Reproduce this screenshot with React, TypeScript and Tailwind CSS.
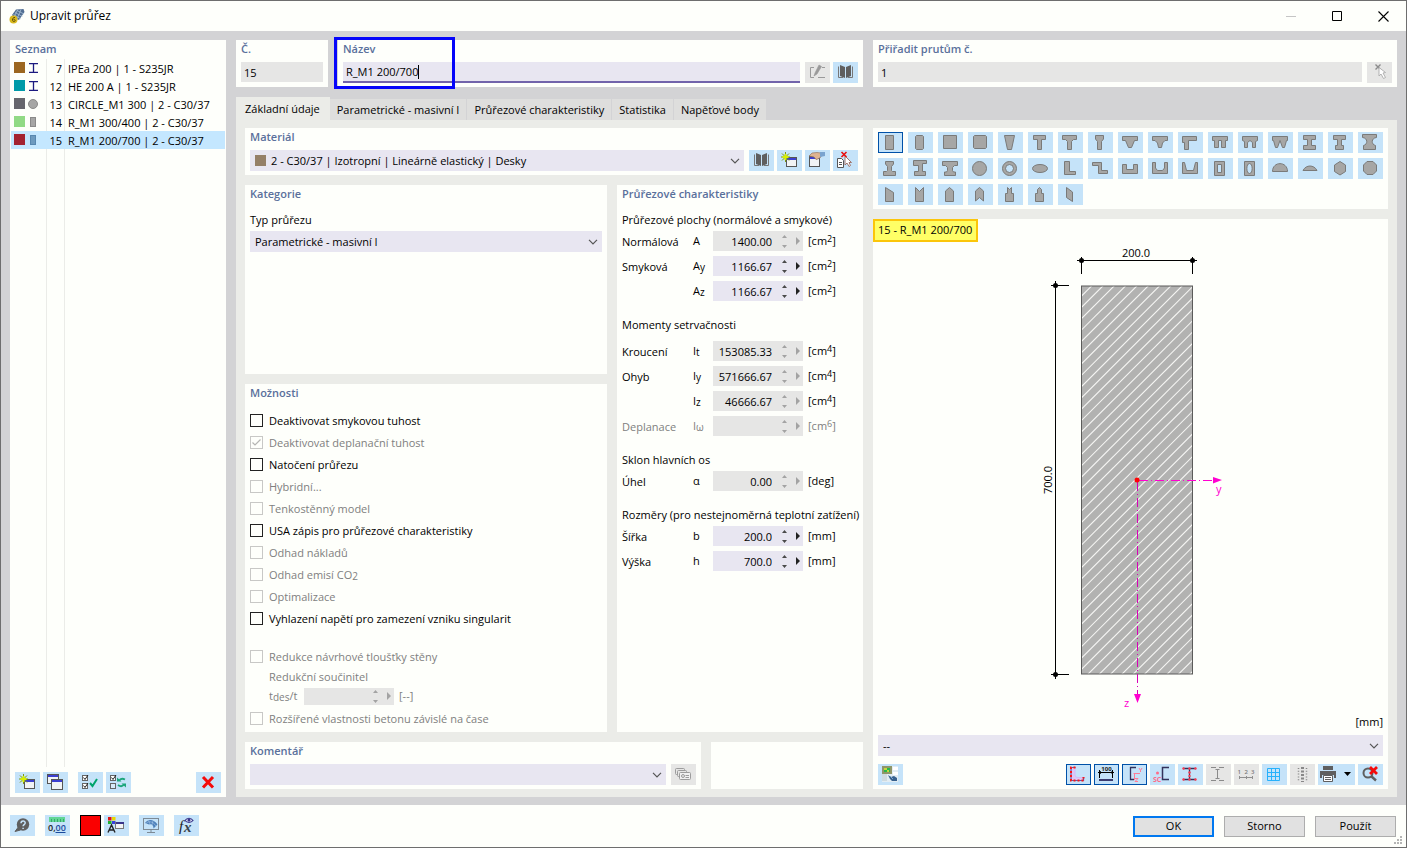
import { useState } from "react";
import type { ReactNode } from "react";
import clsx from "clsx";

/* ---------- shared pieces ---------- */

function Card({ title, className, children }: { title?: string; className?: string; children?: ReactNode }) {
  return (
    <section className={clsx("flex flex-col bg-[#fefffb] px-[5px] pb-1", className)}>
      {title && <h2 className="h-[22px] shrink-0 leading-[18px] font-semibold text-[#5a709b]">{title}</h2>}
      {children}
    </section>
  );
}

type ToolProps = {
  label: string;
  children?: ReactNode;
  off?: boolean;
  active?: boolean;
  wide?: boolean;
};

function Tool({ label, children, off, active, wide }: ToolProps) {
  return (
    <button
      type="button"
      aria-label={label}
      disabled={off}
      className={clsx(
        "relative h-[21px] shrink-0",
        wide ? "w-[37px]" : "w-[25px]",
        off ? "bg-[#e6e6e5]" : "bg-[#c5e3f9]",
        active && "outline outline-1 -outline-offset-1 outline-[#0051a8]",
      )}
    >
      <svg viewBox={wide ? "0 0 37 21" : "0 0 25 21"} className="block h-[21px] w-full" aria-hidden="true">
        {children}
      </svg>
    </button>
  );
}

function Chevron() {
  return (
    <svg viewBox="0 0 10 6" className="pointer-events-none absolute top-2 right-1 h-1.5 w-2.5" aria-hidden="true">
      <path d="M1 .8 5 4.8 9 .8" fill="none" stroke="#555" strokeWidth="1.2" />
    </svg>
  );
}

function Dropdown({ label, options, swatch }: { label: string; options: string[]; swatch?: boolean }) {
  return (
    <div className="relative flex h-[21px] min-w-0 flex-1 items-center gap-[5px] bg-[#e8e6f1] pl-[5px]">
      {swatch && <span className="size-[11px] shrink-0 bg-[#947f67]" />}
      <select aria-label={label} className="h-full min-w-0 flex-1 appearance-none bg-transparent pt-px outline-none">
        {options.map((o) => (
          <option key={o}>{o}</option>
        ))}
      </select>
      <Chevron />
    </div>
  );
}

function NumberField({ id, value, off, short }: { id: string; value: string; off?: boolean; short?: boolean }) {
  const fill = off ? "#a3a3a3" : "#4a4a4a";
  return (
    <div className={clsx("flex w-[90px] shrink-0 items-center", short ? "h-[17px]" : "h-5", off ? "bg-[#e6e6e5]" : "bg-[#e8e6f1]")}>
      <input id={id} defaultValue={value} disabled={off} className="h-full w-[59px] bg-transparent text-right outline-none" />
      <button type="button" aria-label="Krok" disabled={off} className="flex w-6 justify-center">
        <svg viewBox="0 0 5 13" className="h-[13px] w-[5px]" aria-hidden="true">
          <path d="M0 3 2.500 0 5 3ZM0 10 2.500 13 5 10Z" fill={fill} />
        </svg>
      </button>
      <button type="button" aria-label="Nabídka hodnot" disabled={off}>
        <svg viewBox="0 0 4 8" className="h-2 w-1" aria-hidden="true">
          <path d="M0 0 4 4 0 8Z" fill={off ? "#a3a3a3" : "#222"} />
        </svg>
      </button>
    </div>
  );
}

function Low({ children }: { children: ReactNode }) {
  return <span className="align-[-1px] text-[10px] leading-none">{children}</span>;
}

function High({ children }: { children: ReactNode }) {
  return <span className="align-[3px] text-[9px] leading-none">{children}</span>;
}

/* ---------- toolbar drawings ---------- */

const bookIcon = (
  <g fill="#5f5f5f">
    <path d="M7 3 12 5V16L7 14ZM18 3 13 5V16L18 14Z" />
    <path d="M5.500 4.500V15.500H10M19.500 4.500V15.500H15" fill="none" stroke="#777" />
  </g>
);

const smallWindow = (x: number, y: number, w = 10, h = 9) => (
  <g>
    <rect x={x + 0.5} y={y + 0.5} width={w} height={h} fill="#f1f3f5" stroke="#555" />
    <rect x={x + 1} y={y + 1} width={w - 1} height="2" fill="#3c3fd0" />
  </g>
);

const newIcon = (
  <g>
    {smallWindow(9, 7)}
    <path d="M8.500 2V12M4 7H13M5 3.500 12 10.500M12 3.500 5 10.500" stroke="#7d9a10" strokeWidth="1" />
    <path d="M8.500 4V10M5.500 7H11.500" stroke="#d8f000" strokeWidth="2" />
  </g>
);

const copyIcon = (
  <g>
    {smallWindow(4, 2, 11, 9)}
    {smallWindow(8, 7, 11, 10)}
  </g>
);

const editIcon = (
  <g>
    {smallWindow(4, 6, 10, 10)}
    <path d="M4 6 7 3 12 2.500 16 3V7L13 9 11 9.500 9 7Z" fill="#deb492" stroke="#8c6a50" strokeWidth=".6" />
    <path d="M15 2H20V6L15 7Z" fill="#7aa3cf" />
  </g>
);

const cursor = (stroke: string) => (
  <path d="M12 6V15L14 13 16 16.500 17.500 15.500 16 12.500H18.500Z" fill="#fff" stroke={stroke} strokeWidth=".9" />
);

const removeUsageIcon = (
  <g>
    <path d="M4.500 8.500H8.500L10.500 10.500V17.500H4.500Z" fill="#fff" stroke="#555" />
    <path d="M6 12.500H9M6 14.500H9" stroke="#555" />
    {cursor("#9a6a60")}
    <path d="M8.500 2 13.500 7M13.500 2 8.500 7" stroke="#e81010" strokeWidth="1.600" />
  </g>
);

const pickIcon = (
  <g>
    <path d="M8.500 2.500 13.500 7.500M13.500 2.500 8.500 7.500" stroke="#8b8b8b" strokeWidth="1.400" />
    <path d="M12 5.500V14L14 12 16.500 16.500 18.500 15.500 16 11 18.500 10.500Z" fill="#fff" stroke="#aaa" strokeWidth=".9" />
  </g>
);

const renameIcon = (
  <g fill="none" stroke="#9a9a9a">
    <path d="M9 5.500H5.500V15.500H9M13 15.500H20M17 5.500H20" />
    <path d="M9 14 10 11 14 3 16.500 4.500 12 12Z" fill="#999" stroke="#999" strokeWidth=".6" />
  </g>
);

const checkPair = (second: boolean) => (
  <g>
    <rect x="4.500" y="3.500" width="5" height="5" fill="#fff" stroke="#666" />
    <path d="M5.500 5.500 7 7.500 10 3" fill="none" stroke="#222" />
    <rect x="4.500" y="11.500" width="5" height="5" fill={second ? "#fff" : "#d8ebf9"} stroke="#666" />
    {second && <path d="M5.500 13.500 7 15.500 10 11" fill="none" stroke="#222" />}
  </g>
);

const checkAllIcon = (
  <g>
    {checkPair(true)}
    <path d="M12 11 14.500 14 19 7" fill="none" stroke="#00a46c" strokeWidth="2" />
  </g>
);

const invertIcon = (
  <g>
    {checkPair(false)}
    <path d="M19 7.500C17 6.500 15 6.500 13.500 8M12 13C14 14.500 16.500 14.500 18 12.500" fill="none" stroke="#1da67b" strokeWidth="1.800" />
    <path d="M11 9.500V5.500L15.500 9.500ZM20 11.500V15.500L15.500 11.500Z" fill="#1da67b" />
  </g>
);

const deleteIcon = <path d="M7 5 17 15.500M17 5 7 15.500" stroke="#f40b0b" strokeWidth="3" />;

const commentIcon = (
  <g stroke="#9c9c9c" fill="#e6e6e5">
    <rect x="4.500" y="4.500" width="9" height="6" rx="1" />
    <rect x="6.500" y="6.500" width="9" height="6" rx="1" />
    <rect x="8.500" y="8.500" width="11" height="7" rx="1" fill="#f1f1f1" />
    <circle cx="12" cy="12" r="1.500" />
    <path d="M14.500 11.500H18M14.500 13.500H18" />
  </g>
);

const helpIcon = (
  <g>
    <path d="M5 16.500 8 12.500 10.500 15Z" fill="#5f5f5f" stroke="#5f5f5f" />
    <circle cx="13" cy="9.500" r="6.200" fill="#5f5f5f" />
    <path d="M11 8.300C11 5.200 15.300 5.400 15.200 8C15.100 9.600 13.100 9.600 13.100 11.300M13.100 12.700V14" fill="none" stroke="#c5e3f9" strokeWidth="1.500" />
  </g>
);

const unitsIcon = (
  <g>
    <rect x="4" y="2" width="16" height="5" fill="#62d695" />
    <path d="M6.500 4V7M9.500 4V7M12.500 4V7M15.500 4V7M18.500 4V7" stroke="#2a9c60" strokeWidth=".8" />
    <text x="3" y="16" fontSize="9" fontWeight="600" fill="#222">0,</text>
    <text x="10.500" y="16" fontSize="9" fontWeight="600" fill="#1a4a9c">00</text>
    <path d="M10.500 17.500H20.500" stroke="#1a4a9c" />
  </g>
);

const displayIcon = (
  <g>
    <rect x="4" y="2" width="3.500" height="3.500" fill="#e01010" />
    <rect x="8" y="2" width="3.500" height="3.500" fill="#e8d800" />
    <rect x="4" y="6" width="3.500" height="3" fill="#20b030" />
    <rect x="8" y="6" width="3.500" height="3" fill="#3840e0" />
    <path d="M4 17.500 7.500 10 11 17.500M5 15H10M7.500 10V12" fill="none" stroke="#222" strokeWidth="1.400" />
    <rect x="11.500" y="7.500" width="8" height="6" fill="#f1f3f5" stroke="#777" />
    <rect x="12" y="7" width="8" height="2" fill="#38358a" />
  </g>
);

const monitorIcon = (
  <g>
    <rect x="4.500" y="3.500" width="15" height="11" fill="#c5e3f9" stroke="#7d8a95" />
    <path d="M12 15V17M8 17.500H16" stroke="#7d8a95" />
    <path d="M6 8C9 3.500 15 4 18.500 9.500L14.500 13.500C14.500 10.500 13 8.500 10 9.500Z" fill="#4d80ba" />
    <path d="M7 8.500C10 5.500 14 6.500 17 11M9.500 5.500 11 9M14 5.500 13 10" fill="none" stroke="#a9c8e8" strokeWidth=".6" />
  </g>
);

const formulaIcon = (
  <g>
    <text x="5" y="15.500" fontSize="15" fontStyle="italic" fontFamily="Liberation Serif, serif" fill="#222">f</text>
    <text x="10" y="17" fontSize="15" fontStyle="italic" fontWeight="700" fontFamily="Liberation Serif, serif" fill="#38414a">x</text>
    <path d="M11 5.500C13 2.500 17 2.500 19 5.500C17 8 13 8 11 5.500Z" fill="#dfe6f5" stroke="#38358a" strokeWidth="1.200" />
    <circle cx="15" cy="5" r="1.500" fill="#38358a" />
  </g>
);

const renderIcon = (
  <g>
    <rect x="4" y="2" width="16" height="16" fill="#e2edf3" />
    <rect x="4" y="2" width="10" height="8" fill="#8f9668" />
    <path d="M4 10H9V17H4Z" fill="#cfdbe0" />
    <path d="M6 4H12V8H6Z" fill="#28b84a" />
    <path d="M6 4H9V6H6ZM9 6H11V8H9Z" fill="#c3d83a" />
    <path d="M15 3H20V6H15ZM15 8H20V11H15Z" fill="#fff" />
    <path d="M10 11 13 13 16 12 19 14V17H14L12 15Z" fill="#37618e" />
    <path d="M12 12 15 15" stroke="#7fa9cf" />
  </g>
);

const outlineIcon = (
  <g>
    <path d="M5.500 3.500H9V11C9 12.500 10 13.500 12 13.500H17.500V16.500H5.500Z" fill="#dcc8f7" stroke="#d3bcf5" />
    <path d="M9.500 3.500H5V16.500H17.500V13" fill="none" stroke="#605ca8" strokeWidth="1.200" />
    <path d="M9.500 3.500H5V16.500H17.500V13" fill="none" stroke="#fb1616" strokeWidth="2" strokeDasharray="2 2" />
  </g>
);

const dimensionIcon = (
  <g>
    <text x="12.500" y="7" fontSize="6" fontWeight="700" textAnchor="middle" fill="#222">100</text>
    <path d="M5.500 6V14M18.500 6V14M4 8.500H20" stroke="#000" fill="none" />
    <path d="M4 8.500 7 7V10ZM20 8.500 17.500 7V10Z" />
    <rect x="5" y="15" width="14" height="2" fill="#3a3c70" />
  </g>
);

const axesIcon = (
  <g fill="none">
    <path d="M14 3.500H8.500V15.500H12" stroke="#33335c" strokeWidth="1.300" />
    <path d="M11.500 9.500H18M12.500 9V16" stroke="#ff7c96" />
    <path d="M17 4 18.500 6.500 20 4M18.500 6.500V8M13 14.500H16L13 17.500H16" stroke="#ff7c96" />
  </g>
);

const shearCenterIcon = (
  <g fill="none">
    <path d="M19 3.500H12.500V15.500H19" stroke="#33335c" strokeWidth="1.500" />
    <circle cx="7.500" cy="9" r="1.500" fill="#ff6b88" />
    <text x="3" y="17.500" fontSize="7" fontWeight="700" fill="#ff6b88">SC</text>
  </g>
);

const pointsIcon = (
  <g>
    <path d="M5 4.500H18M5 15.500H18M11.500 4V16" stroke="#33335c" strokeWidth="1.300" />
    <g fill="#ff3a50">
      {[[5.5, 4.5], [11.5, 4.5], [17.5, 4.5], [11.5, 8.5], [11.5, 12], [5.5, 15.5], [11.5, 15.5], [17.5, 15.5]].map(([x, y]) => (
        <circle key={`${x}-${y}`} cx={x} cy={y} r="1.200" />
      ))}
    </g>
  </g>
);

const partsIcon = (
  <g stroke="#8a8a8a">
    <path d="M5 3.500H10M13 3.500H18M5 16.500H10M13 16.500H18M11.500 5V15M9.500 5.500H13.500M9.500 14.500H13.500" />
  </g>
);

const numberingIcon = (
  <g>
    <text x="3.500" y="10" fontSize="6" fontWeight="600" fill="#7a7a7a">1</text>
    <text x="10.500" y="10" fontSize="6" fontWeight="600" fill="#7a7a7a">2</text>
    <text x="17" y="10" fontSize="6" fontWeight="600" fill="#7a7a7a">3</text>
    <path d="M5 13.500H19M5.500 12V15M12.500 12V15M18.500 12V15" stroke="#8f8f8f" />
  </g>
);

const gridIcon = (
  <path d="M5.500 4.500H17.500V16.500H5.500ZM9.500 4.500V16.500M13.500 4.500V16.500M5.500 8.500H17.500M5.500 12.500H17.500" fill="none" stroke="#27b1fb" />
);

const stressIcon = (
  <g stroke="#888" strokeDasharray="2 1.500">
    <path d="M8.500 4V17M16.500 4V17" strokeWidth="1.500" strokeDasharray="1 1.800" />
    <path d="M12.500 3V18" strokeWidth="3" />
  </g>
);

const printIcon = (
  <g>
    <path d="M5 2H15V6H5ZM2 7H18V14H16V11H4V14H2Z" fill="#5f5f5f" />
    <path d="M5.500 11.500H14.500V17.500H5.500Z" fill="#fff" stroke="#5f5f5f" />
    <path d="M7 13.500H13M7 15.500H13" stroke="#5f5f5f" />
    <path d="M26 8H33L29.500 12Z" fill="#000" />
  </g>
);

const zoomResetIcon = (
  <g>
    <circle cx="10" cy="9" r="4.500" fill="none" stroke="#5f5f5f" strokeWidth="2" />
    <path d="M13 12 18 16.500" stroke="#5f5f5f" strokeWidth="2.400" />
    <path d="M12 3 19 10M19 3 12 10" stroke="#f40b0b" strokeWidth="2.800" />
  </g>
);

/* ---------- section library ---------- */

const library: { name: string; d: string }[] = [
  { name: "Obdélník", d: "M7.500 3.500H15.500V17.500H7.500Z" },
  { name: "Obdélník zaoblený", d: "M8.500 3.500H14.500L15.500 4.500V16.500L14.500 17.500H8.500L7.500 16.500V4.500Z" },
  { name: "Čtverec", d: "M5.500 3.500H18.500V16.500H5.500Z" },
  { name: "Čtverec zaoblený", d: "M6.500 3.500H17.500L18.500 4.500V15.500L17.500 16.500H6.500L5.500 15.500V4.500Z" },
  { name: "Lichoběžník", d: "M6.500 3.500H16.500L13.500 17.500H9.500Z" },
  { name: "T", d: "M5.500 3.500H17.500V7.500H13.500V17.500H9.500V7.500H5.500Z" },
  { name: "T s náběhem", d: "M4.500 3.500H18.500V7.500H15.500L13.500 9.500V17.500H9.500V9.500L7.500 7.500H4.500Z" },
  { name: "T úzké", d: "M7.500 3.500H15.500V7L13.500 9.500V17.500H9.500V9.500L7.500 7Z" },
  { name: "T zkosené", d: "M4.500 4.500H19.500V8.500H16.500L13.500 15.500H10.500L7.500 8.500H4.500Z" },
  { name: "T zaoblené", d: "M4.500 4.500H19.500V8.500H17L14.500 11L13.500 15.500H10.500L9.500 11L7 8.500H4.500Z" },
  { name: "T jednostranné", d: "M4.500 4.500H18.500V8.500H10.500V17.500H6.500V10.500H4.500Z" },
  { name: "TT", d: "M4.500 4.500H19.500V8.500H17.500V15.500H13.500V8.500H10.500V15.500H6.500V8.500H4.500Z" },
  { name: "TT s náběhem", d: "M4.500 4.500H19.500V8.500L17.500 9.500V15.500H14.500V10.500L12 8.500L9.500 10.500V15.500H6.500V9.500L4.500 8.500Z" },
  { name: "TT zkosené", d: "M4.500 4.500H19.500V8.500H18.500L16.500 15.500H14.500L12 8.500L9.500 15.500H7.500L5.500 8.500H4.500Z" },
  { name: "I symetrické", d: "M5.500 3.500H17.500V7.500H13.500V13.500H17.500V17.500H5.500V13.500H9.500V7.500H5.500Z" },
  { name: "I nesymetrické", d: "M5.500 3.500H17.500V7.500H13.500V13.500H15.500V17.500H7.500V13.500H9.500V7.500H5.500Z" },
  { name: "I s oblouky", d: "M4.500 2.500H18.500V5.500C13 6 13 12.500 17.500 13.500V17.500H5.500V13.500C10 12.500 10 6 4.500 5.500Z" },
  { name: "I s náběhy", d: "M7.500 3.500H15.500V6L13.500 8.500V12.500L14.500 13.500H17.500V17.500H5.500V13.500H8.500L9.500 12.500V8.500L7.500 6Z" },
  { name: "I posunuté", d: "M5.500 2.500H18.500V5.500H14.500V13.500H17.500V17.500H6.500V13.500H10.500V7.500H5.500Z" },
  { name: "I široké", d: "M4.500 3.500H19.500V7.500H16.500L14.500 9.500V12.500L15.500 14H17.500V17.500H6.500V14H8.500L9.500 12.500V9.500L7.500 7.500H4.500Z" },
  { name: "Kruh", d: "M11.500 3.500A7 7 0 1 1 11.500 17.500A7 7 0 1 1 11.500 3.500Z" },
  { name: "Mezikruží", d: "M11.500 3.500A7 7 0 1 1 11.500 17.500A7 7 0 1 1 11.500 3.500ZM11.500 6.500A4 4 0 1 0 11.500 14.500A4 4 0 1 0 11.500 6.500Z" },
  { name: "Elipsa", d: "M12 6.500A7.500 4 0 1 1 12 14.500A7.500 4 0 1 1 12 6.500Z" },
  { name: "L", d: "M6.500 3.500H11.500V13.500H17.500V16.500H6.500Z" },
  { name: "Z", d: "M4.500 4.500H13.500V12.500H19.500V15.500H10.500V7.500H4.500Z" },
  { name: "U", d: "M4.500 6.500H8.500V11.500H15.500V6.500H19.500V15.500H4.500Z" },
  { name: "U zaoblené", d: "M4.500 4.500H7.500V10L9.500 12.500H14.500L16.500 10V4.500H19.500V15.500H4.500Z" },
  { name: "U zkosené", d: "M4.500 4.500H6.500L8.500 12.500H15.500L17.500 4.500H19.500V15.500H4.500Z" },
  { name: "Truhlík", d: "M6.500 3.500H16.500V17.500H6.500ZM9.500 6.500V14.500H13.500V6.500Z" },
  { name: "Truhlík oválný", d: "M6.500 3.500H16.500V17.500H6.500ZM11.500 5.500C8 5.500 8 15.500 11.500 15.500C15 15.500 15 5.500 11.500 5.500Z" },
  { name: "Půlkruh", d: "M4.500 13.500C4.500 3 19.500 3 19.500 13.500Z" },
  { name: "Úseč", d: "M5 12.500C8 6.500 16 6.500 19 12.500Z" },
  { name: "Šestiúhelník", d: "M12 3.500L17.500 7V13.500L12 17L6.500 13.500V7Z" },
  { name: "Osmiúhelník", d: "M9 3.500H15L18.500 7V13L15 16.500H9L5.500 13V7Z" },
  { name: "Zkosený obdélník", d: "M7.500 3.500L15.500 8.500V17.500H7.500Z" },
  { name: "Obdélník se zářezem", d: "M7.500 3.500L11.500 7.500L15.500 3.500V17.500H7.500Z" },
  { name: "Pětiúhelník", d: "M7.500 7L11.500 3.500L15.500 7V17.500H7.500Z" },
  { name: "Šipka", d: "M7.500 7L11.500 3.500L15.500 7V17L11.500 13.500L7.500 17Z" },
  { name: "Lahev se zářezem", d: "M9.500 3.500L11.500 5.500L13.500 3.500V9.500H15.500V17.500H7.500V9.500H9.500Z" },
  { name: "Lahev", d: "M9.500 5.500L11.500 3.500L13.500 5.500V9.500H15.500V17.500H7.500V9.500H9.500Z" },
  { name: "Rovnoběžník", d: "M8.500 3.500L14.500 8V17.500L8.500 13.500Z" },
];

function ShapeLibrary() {
  const [picked, setPicked] = useState(0);
  return (
    <section className="bg-[#fefffb] px-[5px] py-1">
      <div className="flex flex-wrap gap-[5px]">
        {library.map((s, i) => (
          <button
            key={s.name}
            type="button"
            aria-label={s.name}
            aria-pressed={picked === i}
            onClick={() => setPicked(i)}
            className={clsx("h-[21px] w-[25px] bg-[#c5e3f9]", picked === i && "outline outline-1 -outline-offset-1 outline-[#0051a8]")}
          >
            <svg viewBox="0 0 25 21" className="block h-[21px] w-[25px]" aria-hidden="true">
              <path d={s.d} fill="#a6a6a5" fillRule="evenodd" stroke="#7a7a79" />
            </svg>
          </button>
        ))}
      </div>
    </section>
  );
}

/* ---------- section list ---------- */

const iShape = <path d="M1 .5H10M1 9.500H10M5.500 1V9" stroke="#1c1a80" strokeWidth="1.300" />;
const sections = [
  { no: 7, name: "IPEa 200 | 1 - S235JR", swatch: "bg-[#9c6620]", icon: iShape },
  { no: 12, name: "HE 200 A | 1 - S235JR", swatch: "bg-[#009aa8]", icon: iShape },
  { no: 13, name: "CIRCLE_M1 300 | 2 - C30/37", swatch: "bg-[#66666d]", icon: <circle cx="5" cy="5" r="4.500" fill="#a6a6a5" stroke="#8a8a89" /> },
  { no: 14, name: "R_M1 300/400 | 2 - C30/37", swatch: "bg-[#91da85]", icon: <rect x="2.500" y=".5" width="5" height="9" fill="#a6a6a5" stroke="#8a8a89" /> },
  { no: 15, name: "R_M1 200/700 | 2 - C30/37", swatch: "bg-[#a32331]", icon: <rect x="2.500" y=".5" width="5" height="9" fill="#6d9abf" stroke="#5787b0" /> },
];

function SectionList() {
  return (
    <aside className="flex w-[216px] shrink-0 flex-col bg-[#fefffb] pb-1">
      <h2 className="h-[19px] px-[5px] leading-[18px] font-semibold text-[#5a709b]">Seznam</h2>
      <ul className="px-px">
        {sections.map((s) => {
          const on = s.no === 15;
          const edge = on ? "border-transparent" : "border-[#ebece8]";
          return (
            <li key={s.no} className={clsx("flex h-[18px]", on && "bg-[#c4e7ff]")}>
              <span className={clsx("flex w-9 items-center gap-[3px] border-r pb-px pl-[3px]", edge)}>
                <span className={clsx("size-[11px]", s.swatch)} />
                <svg viewBox="0 0 11 10" className="h-2.5 w-[11px]" aria-hidden="true">{s.icon}</svg>
              </span>
              <span className={clsx("w-[18px] border-r pr-0.5 text-right leading-5", edge)}>{s.no}</span>
              <span className="pl-[3px] leading-5 whitespace-nowrap">{s.name}</span>
            </li>
          );
        })}
      </ul>
      <div className="flex flex-1 px-px">
        <span className="w-9 border-r border-[#ebece8]" />
        <span className="w-[18px] border-r border-[#ebece8]" />
      </div>
      <div className="flex gap-[3px] px-[5px] pt-[5px]">
        <Tool label="Nový průřez">{newIcon}</Tool>
        <Tool label="Kopírovat průřez">{copyIcon}</Tool>
        <div className="ml-[7px] flex flex-1 gap-[3px]">
          <Tool label="Vybrat vše">{checkAllIcon}</Tool>
          <Tool label="Obrátit výběr">{invertIcon}</Tool>
        </div>
        <Tool label="Smazat">{deleteIcon}</Tool>
      </div>
    </aside>
  );
}

/* ---------- properties ---------- */

type Property = { id: string; label: string; sym: string; sub?: string; value: string; unit: string; exp?: string; off?: boolean; muted?: boolean };
type PropertyGroup = { title: string; cls: string; rows: Property[] };

const groups: PropertyGroup[] = [
  {
    title: "Průřezové plochy (normálové a smykové)",
    cls: "pt-[5px] pb-[3px]",
    rows: [
      { id: "A", label: "Normálová", sym: "A", value: "1400.00", unit: "cm", exp: "2", off: true },
      { id: "Ay", label: "Smyková", sym: "A", sub: "y", value: "1166.67", unit: "cm", exp: "2" },
      { id: "Az", label: "", sym: "A", sub: "z", value: "1166.67", unit: "cm", exp: "2" },
    ],
  },
  {
    title: "Momenty setrvačnosti",
    cls: "pt-[11px] pb-2",
    rows: [
      { id: "It", label: "Kroucení", sym: "I", sub: "t", value: "153085.33", unit: "cm", exp: "4", off: true },
      { id: "Iy", label: "Ohyb", sym: "I", sub: "y", value: "571666.67", unit: "cm", exp: "4", off: true },
      { id: "Iz", label: "", sym: "I", sub: "z", value: "46666.67", unit: "cm", exp: "4", off: true },
      { id: "Iw", label: "Deplanace", sym: "I", sub: "ω", value: "", unit: "cm", exp: "6", off: true, muted: true },
    ],
  },
  {
    title: "Sklon hlavních os",
    cls: "pt-[11px] pb-[3px]",
    rows: [{ id: "alpha", label: "Úhel", sym: "α", value: "0.00", unit: "deg", off: true }],
  },
  {
    title: "Rozměry (pro nestejnoměrná teplotní zatížení)",
    cls: "pt-[11px] pb-[3px]",
    rows: [
      { id: "b", label: "Šířka", sym: "b", value: "200.0", unit: "mm" },
      { id: "h", label: "Výška", sym: "h", value: "700.0", unit: "mm" },
    ],
  },
];

function Properties() {
  return (
    <Card title="Průřezové charakteristiky" className="w-[246px] shrink-0">
      {groups.map((g) => (
        <div key={g.title}>
          <h3 className={clsx("leading-4 whitespace-nowrap", g.cls)}>{g.title}</h3>
          {g.rows.map((r) => (
            <div key={r.id} className={clsx("mb-[5px] flex h-5 items-center", r.muted && "text-[#808080]")}>
              <label htmlFor={r.id} className="flex w-[91px] shrink-0 leading-5">
                <span className="w-[71px] pt-px">{r.label}</span>
                <span>
                  {r.sym}
                  {r.sub && <Low>{r.sub}</Low>}
                </span>
              </label>
              <NumberField id={r.id} value={r.value} off={r.off} />
              <span className="pl-[5px] leading-5">
                [{r.unit}
                {r.exp && <High>{r.exp}</High>}]
              </span>
            </div>
          ))}
        </div>
      ))}
    </Card>
  );
}

function Check({ id, off, checked, children }: { id: string; off?: boolean; checked?: boolean; children: ReactNode }) {
  return (
    <div className="flex h-[22px] items-start gap-1.5 pt-1">
      <span className="relative size-[13px] shrink-0">
        <input
          id={id}
          type="checkbox"
          defaultChecked={checked}
          disabled={off}
          className="peer block size-[13px] appearance-none border border-[#222] disabled:border-[#c8c8c6]"
        />
        <svg viewBox="0 0 13 13" className="pointer-events-none absolute inset-0 hidden size-[13px] peer-checked:block" aria-hidden="true">
          <path d="M2.500 6.500 5 9 10.500 3.500" fill="none" stroke={off ? "#b5b5b3" : "#222"} strokeWidth="1.200" />
        </svg>
      </span>
      <label htmlFor={id} className={clsx("leading-[14px] whitespace-nowrap", off && "text-[#808080]")}>{children}</label>
    </div>
  );
}

function Options() {
  return (
    <Card title="Možnosti" className="h-[348px] shrink-0">
      <div className="pt-1">
        <Check id="o1">Deaktivovat smykovou tuhost</Check>
        <Check id="o2" off checked>Deaktivovat deplanační tuhost</Check>
        <Check id="o3">Natočení průřezu</Check>
        <Check id="o4" off>Hybridní...</Check>
        <Check id="o5" off>Tenkostěnný model</Check>
        <Check id="o6">USA zápis pro průřezové charakteristiky</Check>
        <Check id="o7" off>Odhad nákladů</Check>
        <Check id="o8" off>Odhad emisí CO<Low>2</Low></Check>
        <Check id="o9" off>Optimalizace</Check>
        <Check id="o10">Vyhlazení napětí pro zamezení vzniku singularit</Check>
      </div>
      <div className="pt-4 text-[#808080]">
        <Check id="o11" off>Redukce návrhové tloušťky stěny</Check>
        <p className="pl-[19px] leading-[18px]">Redukční součinitel</p>
        <div className="mb-0.5 flex h-5 items-center gap-[5px] pl-[19px]">
          <label htmlFor="tdes" className="w-[30px] leading-5">t<Low>des</Low>/t</label>
          <NumberField id="tdes" value="" off short />
          <span>[--]</span>
        </div>
        <Check id="o12" off>Rozšířené vlastnosti betonu závislé na čase</Check>
      </div>
    </Card>
  );
}

/* ---------- preview ---------- */

const hatch = Array.from({ length: 44 }, (_, k) => 285.5 + k * 11.314);

function SectionDrawing() {
  return (
    <svg viewBox="0 0 515 493" className="block h-[493px] w-full" role="img" aria-label="Průřez 200 × 700 mm">
      <defs>
        <clipPath id="body">
          <rect x="208" y="67" width="112" height="388" />
        </clipPath>
      </defs>
      <rect x="208.500" y="67" width="111" height="388" fill="#b2b2b1" />
      <g clipPath="url(#body)" stroke="#f6f6f4" strokeWidth="1.100">
        {hatch.map((s) => (
          <line key={s} x1={208} y1={s - 208} x2={320} y2={s - 320} />
        ))}
      </g>
      <rect x="208.500" y="67" width="111" height="388" fill="none" stroke="#5b5b5a" />

      <g stroke="#000" fill="none">
        <path d="M204 41.500H324M208.500 38V55M319.500 38V55" />
        <path d="M182.500 62V460M178 66.500H196M178 455.500H196" />
      </g>
      <circle cx="208.500" cy="41.500" r="2.500" />
      <circle cx="319.500" cy="41.500" r="2.500" />
      <circle cx="182.500" cy="66.500" r="2.500" />
      <circle cx="182.500" cy="455.500" r="2.500" />
      <text x="263" y="38" textAnchor="middle">200.0</text>
      <text x="0" y="0" textAnchor="middle" transform="translate(179 261) rotate(-90)">700.0</text>

      <g stroke="#ff00d0" fill="none">
        <path d="M266 261.500H341" strokeDasharray="9 3 1 3" />
        <path d="M264.500 263V475" strokeDasharray="9 3 1 3" stroke="#d800b8" />
      </g>
      <path d="M340 258 349 261 340 264.500ZM261 475H268L264.500 484Z" fill="#ff00d0" />
      <circle cx="264" cy="261" r="2.500" fill="#fb0505" />
      <text x="343" y="274" fill="#ff00d0">y</text>
      <text x="251" y="488" fill="#ff00d0">z</text>
    </svg>
  );
}

function Preview() {
  return (
    <section className="relative flex flex-1 flex-col bg-[#fefffb] pb-1">
      <div className="absolute top-0 left-0 border-2 border-[#fbc60a] bg-[#ffff66] pr-1 pb-px pl-[3px] leading-[18px]">15 - R_M1 200/700</div>
      <SectionDrawing />
      <div className="mt-auto px-[5px]">
        <p className="pb-[5px] text-right leading-4">[mm]</p>
        <div className="flex">
          <Dropdown label="Zobrazení" options={["--"]} />
        </div>
        <div className="flex gap-[3px] pt-2">
          <div className="flex flex-1">
            <Tool label="Vykreslení">{renderIcon}</Tool>
          </div>
          <Tool label="Obrys" active>{outlineIcon}</Tool>
          <Tool label="Kóty" active>{dimensionIcon}</Tool>
          <Tool label="Osy" active>{axesIcon}</Tool>
          <Tool label="Střed smyku">{shearCenterIcon}</Tool>
          <Tool label="Body">{pointsIcon}</Tool>
          <Tool label="Části" off>{partsIcon}</Tool>
          <Tool label="Číslování" off>{numberingIcon}</Tool>
          <Tool label="Mřížka">{gridIcon}</Tool>
          <Tool label="Napětí" off>{stressIcon}</Tool>
          <Tool label="Tisk" wide>{printIcon}</Tool>
          <Tool label="Obnovit pohled">{zoomResetIcon}</Tool>
        </div>
      </div>
    </section>
  );
}

/* ---------- frame ---------- */

const tabs = ["Základní údaje", "Parametrické - masivní I", "Průřezové charakteristiky", "Statistika", "Napěťové body"];

function TitleBar() {
  return (
    <header className="flex h-[30px] items-center pl-2">
      <svg viewBox="0 0 16 16" className="size-4" aria-hidden="true">
        <path d="M3 7 7 1.500 14.500 1 15.500 4 10 12 5 10Z" fill="#506d92" />
        <path d="M4.500 6.500 12 11M6 4.500 13.500 8.500M8 2.500 15 6M8.500 2 5 9M12 1.500 8 11" stroke="#b5cbe0" strokeWidth=".7" />
        <circle cx="4.500" cy="11.500" r="4" fill="#d8b81c" />
        <path d="M6 9.500C3 9 2.800 13.500 4.800 13.500C6.800 13.500 6.500 11 4.500 11.300" fill="none" stroke="#5d4d08" />
      </svg>
      <h1 className="flex-1 pl-[5px] text-[12px] leading-4">Upravit průřez</h1>
      <button type="button" aria-label="Minimalizovat" disabled className="flex w-[46px] justify-center">
        <svg viewBox="0 0 11 11" className="size-[11px]"><path d="M0 5.500H10" stroke="#c5c5c5" /></svg>
      </button>
      <button type="button" aria-label="Maximalizovat" className="flex w-[46px] justify-center">
        <svg viewBox="0 0 11 11" className="size-[11px]"><path d="M.5 .5H9.500V9.500H.5Z" fill="none" stroke="#000" /></svg>
      </button>
      <button type="button" aria-label="Zavřít" className="flex w-[46px] justify-center">
        <svg viewBox="0 0 11 11" className="size-[11px]"><path d="M.5 .5 10.500 10.500M10.500 .5 .5 10.500" stroke="#000" strokeWidth="1.100" /></svg>
      </button>
    </header>
  );
}

function Footer() {
  const plain = "h-[21px] w-[81px] border border-[#adadad] bg-[#e1e1e1]";
  return (
    <footer className="relative flex h-[42px] items-start pt-2.5 pr-2.5 pl-[9px]">
      <Tool label="Nápověda">{helpIcon}</Tool>
      <div className="flex pl-2.5">
        <Tool label="Jednotky">{unitsIcon}</Tool>
      </div>
      <div className="flex gap-[3px] pl-2.5">
        <button type="button" aria-label="Barva" className="size-[21px] border border-black bg-[#fa0000]" />
        <Tool label="Zobrazení popisků">{displayIcon}</Tool>
      </div>
      <div className="flex pl-2.5">
        <Tool label="Náhled">{monitorIcon}</Tool>
      </div>
      <div className="flex flex-1 pl-2.5">
        <Tool label="Vzorce">{formulaIcon}</Tool>
      </div>
      <div className="flex gap-2.5 pt-px">
        <button type="submit" className="h-[21px] w-[81px] border-2 border-[#0078f0] bg-[#e1e1e1]">OK</button>
        <button type="button" className={plain}>Storno</button>
        <button type="button" className={plain}>Použít</button>
      </div>
      <svg viewBox="0 0 9 9" className="absolute right-[3px] bottom-0.5 size-[9px]" aria-hidden="true">
        <path d="M6 0H8V2H6ZM3 3H5V5H3ZM6 3H8V5H6ZM0 6H2V8H0ZM3 6H5V8H3ZM6 6H8V8H6Z" fill="#b5b5b5" />
      </svg>
    </footer>
  );
}

export default function App() {
  const [tab, setTab] = useState(tabs[0]);
  return (
    <div className="flex min-h-screen flex-col border border-[#6e6e6e] bg-[#fefffb] font-['Open_Sans','Noto_Sans',sans-serif] text-[11px] text-black">
      <TitleBar />
      <main className="flex flex-1 gap-2.5 bg-[#d3d3d5] px-[9px] pt-[9px] pb-2">
        <SectionList />
        <div className="flex min-w-0 flex-1 flex-col">
          <div className="grid grid-cols-[627fr_524fr] gap-2.5">
            <div className="flex gap-2.5">
              <Card title="Č." className="w-[92px] shrink-0">
                <input aria-label="Č." readOnly defaultValue="15" className="h-5 w-full bg-[#e6e6e5] px-[3px] outline-none" />
              </Card>
              <Card title="Název" className="relative flex-1">
                <div className="flex gap-[3px]">
                  <div className="mr-0.5 flex h-[21px] flex-1 items-center border-b-2 border-[#7264ab] bg-[#e8e6f1] pt-px pl-[3px]">
                    <input aria-label="Název" defaultValue="R_M1 200/700" className="field-sizing-content bg-transparent outline-none" />
                    <span className="h-3.5 w-px bg-black" />
                  </div>
                  <Tool label="Přejmenovat" off>{renameIcon}</Tool>
                  <Tool label="Knihovna průřezů">{bookIcon}</Tool>
                </div>
                <span className="pointer-events-none absolute -top-[3px] -left-1 h-[52px] w-[121px] border-3 border-[#0505fa]" />
              </Card>
            </div>
            <Card title="Přiřadit prutům č.">
              <div className="flex gap-[5px]">
                <input aria-label="Přiřadit prutům č." readOnly defaultValue="1" className="h-5 min-w-0 flex-1 bg-[#e6e6e5] px-[3px] outline-none" />
                <Tool label="Vybrat pruty" off>{pickIcon}</Tool>
              </div>
            </Card>
          </div>

          <div role="tablist" className="flex items-end pt-2.5">
            {tabs.map((t) => (
              <button
                key={t}
                type="button"
                role="tab"
                aria-selected={tab === t}
                onClick={() => setTab(t)}
                className={clsx(
                  "border-r pt-px",
                  tab === t ? "h-[23px] border-[#ebece8] bg-[#ebece8] px-[9px]" : "h-[21px] border-[#d3d3d5] bg-[#dededd] px-[7px]",
                )}
              >
                {t}
              </button>
            ))}
          </div>

          <div className="grid flex-1 grid-cols-[618fr_515fr] gap-2.5 bg-[#ebece8] px-[9px] pt-2 pb-2">
            <div className="flex min-w-0 flex-col gap-2.5">
              <Card title="Materiál">
                <div className="flex gap-[3px]">
                  <div className="flex flex-1 pr-0.5">
                    <Dropdown label="Materiál" options={["2 - C30/37 | Izotropní | Lineárně elastický | Desky"]} swatch />
                  </div>
                  <Tool label="Knihovna materiálů">{bookIcon}</Tool>
                  <Tool label="Nový materiál">{newIcon}</Tool>
                  <Tool label="Upravit materiál">{editIcon}</Tool>
                  <Tool label="Zrušit přiřazení">{removeUsageIcon}</Tool>
                </div>
              </Card>
              <div className="flex flex-1 gap-2.5">
                <div className="flex min-w-0 flex-1 flex-col gap-2.5">
                  <Card title="Kategorie" className="flex-1">
                    <p className="pt-[5px] pb-[3px] leading-4">Typ průřezu</p>
                    <div className="flex">
                      <Dropdown label="Typ průřezu" options={["Parametrické - masivní I"]} />
                    </div>
                  </Card>
                  <Options />
                </div>
                <Properties />
              </div>
              <div className="flex gap-2.5">
                <Card title="Komentář" className="flex-1">
                  <div className="flex gap-[5px]">
                    <Dropdown label="Komentář" options={[""]} />
                    <Tool label="Vybrat komentář" off>{commentIcon}</Tool>
                  </div>
                </Card>
                <Card className="w-[152px] shrink-0" />
              </div>
            </div>
            <div className="flex min-w-0 flex-col gap-2.5">
              <ShapeLibrary />
              <Preview />
            </div>
          </div>
        </div>
      </main>
      <Footer />
    </div>
  );
}
